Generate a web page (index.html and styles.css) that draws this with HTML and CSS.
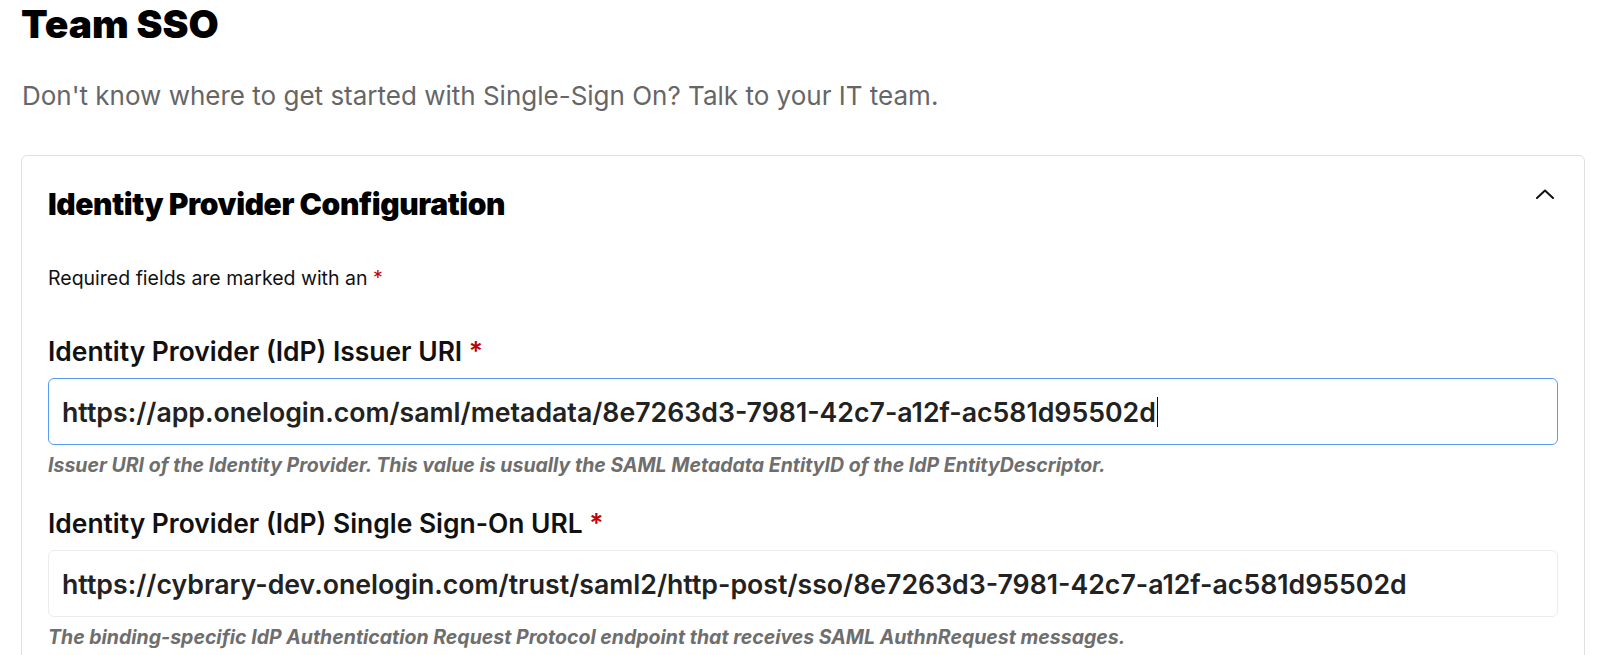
FILE: index.html
```html
<!DOCTYPE html>
<html lang="en">
<head>
<meta charset="utf-8">
<title>Team SSO</title>
<link rel="stylesheet" href="styles.css">
</head>
<body>
<main class="page">
  <h1 class="page-title">Team SSO</h1>
  <p class="page-sub">Don't know where to get started with Single-Sign On? Talk to your IT team.</p>
  <section class="card">
    <div class="card-head">
      <h2 class="card-title">Identity Provider Configuration</h2>
      <svg class="chevron" width="18" height="10" viewBox="0 0 18 10" aria-hidden="true"><path d="M1 9 L9 1.5 L17 9" fill="none" stroke="#111" stroke-width="2" stroke-linecap="round" stroke-linejoin="round"/></svg>
    </div>
    <p class="req-note">Required fields are marked with an <span class="req">*</span></p>
    <div class="field">
      <label class="field-label">Identity Provider (IdP) Issuer URI <span class="req">*</span></label>
      <div class="input focused">https://app.onelogin.com/saml/metadata/8e7263d3-7981-42c7-a12f-ac581d95502d<span class="caret"></span></div>
      <p class="help">Issuer URI of the Identity Provider. This value is usually the SAML Metadata EntityID of the IdP EntityDescriptor.</p>
    </div>
    <div class="field">
      <label class="field-label">Identity Provider (IdP) Single Sign-On URL <span class="req">*</span></label>
      <div class="input">https://cybrary-dev.onelogin.com/trust/saml2/http-post/sso/8e7263d3-7981-42c7-a12f-ac581d95502d</div>
      <p class="help">The binding-specific IdP Authentication Request Protocol endpoint that receives SAML AuthnRequest messages.</p>
    </div>
  </section>
</main>
</body>
</html>
```

FILE: styles.css
```css
* { box-sizing: border-box; }
html, body { margin: 0; padding: 0; background: #fff; }
body { font-family: Inter, "Noto Sans", sans-serif; color: #111; }
.page { padding: 0 15px 0 21px; }
.page-title {
  margin: 0;
  font-size: 39px;
  line-height: 48px;
  font-weight: 900;
  color: #000;
}
.page-sub {
  margin: 32px 0 0 1px;
  font-size: 26px;
  line-height: 32px;
  color: #666;
}
.card {
  margin-top: 43px;
  border: 1px solid #e0e0e0;
  border-radius: 6px;
  padding: 30px 26px 20px 26px;
}
.card-head { display: flex; justify-content: space-between; align-items: flex-start; }
.card-title {
  margin: 0;
  font-size: 30px;
  line-height: 36px;
  font-weight: 900;
  letter-spacing: -0.4px;
  color: #000;
}
.chevron { margin: 3px 4px 0 0; }
.req-note { margin: 43px 0 0; font-size: 19.5px; line-height: 26px; color: #111; }
.req { color: #c40000; }
.field { margin-top: 44px; }
.field + .field { margin-top: 29px; }
.field-label { display: block; font-size: 26.4px; line-height: 32px; font-weight: 600; color: #111; }
.input {
  margin-top: 11px;
  height: 67px;
  display: flex;
  align-items: center;
  padding: 0 13px;
  border: 1px solid #ececec;
  border-radius: 6px;
  font-size: 26.7px;
  font-weight: 600;
  color: #222;
  white-space: nowrap;
}
.input.focused { border-color: #5a9cf5; }
.caret { display: inline-block; width: 1px; height: 30px; background: #111; margin-left: 1px; }
.help {
  margin: 7px 0 0;
  font-size: 19.5px;
  line-height: 26px;
  font-style: italic;
  font-weight: 700;
  color: #6e6e6e;
}
```
